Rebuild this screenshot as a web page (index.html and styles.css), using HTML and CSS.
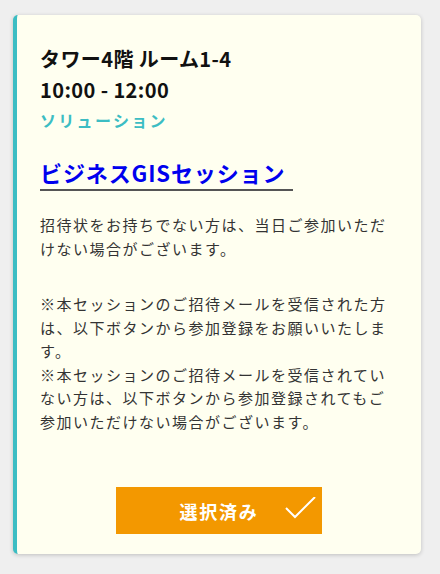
FILE: index.html
```html
<!DOCTYPE html>
<html lang="ja">
<head>
    <meta charset="UTF-8">
    <meta name="viewport" content="width=device-width, initial-scale=1.0">
    <title>ビジネスGISセッション</title>
    <link rel="stylesheet" href="styles.css">
</head>
<body>
    <div class="session-card">
        <div class="session-place">タワー4階 ルーム1-4</div>
        <div class="session-time">10:00 - 12:00</div>
        <div class="session-category">ソリューション</div>

        <h2 class="session-title"><a href="#">ビジネスGISセッション</a></h2>

        <p class="session-desc">招待状をお持ちでない方は、当日ご参加いただけない場合がございます。</p>
        <p class="session-desc session-note">※本セッションのご招待メールを受信された方は、以下ボタンから参加登録をお願いいたします。<br>※本セッションのご招待メールを受信されていない方は、以下ボタンから参加登録されてもご参加いただけない場合がございます。</p>

        <div class="session-action">
            <button class="select-btn" type="button">
                選択済み
                <svg class="check-icon" viewBox="0 0 32 24" width="32" height="24">
                    <polyline points="2,11 11,20 31,0" fill="none" stroke="#fff" stroke-width="2"/>
                </svg>
            </button>
        </div>
    </div>
</body>
</html>
```

FILE: styles.css
```css
:root {
    --fondo: #efefef;
    --tarjeta: #fffff0;
    --turquesa: #3cbdc3;
    --naranja: #f39800;
    --texto: #333333;
}

body {
    margin: 0;
    padding: 15px 19px 20px 13px;
    background-color: var(--fondo);
    font-family: "Noto Sans CJK JP", "Noto Sans", sans-serif;
    color: var(--texto);
}

.session-card {
    background: var(--tarjeta);
    border-left: 4px solid var(--turquesa);
    border-radius: 5px;
    box-shadow: 0 1px 4px rgba(0, 0, 0, 0.2);
    padding: 28px 23px 20px 23px;
}

.session-place,
.session-time {
    font-size: 20px;
    font-weight: bold;
    line-height: 31px;
    letter-spacing: 0.02em;
    color: #111;
}

.session-category {
    margin-top: 2px;
    font-size: 16px;
    font-weight: bold;
    line-height: 26px;
    letter-spacing: 2.3px;
    color: var(--turquesa);
}

.session-title {
    margin: 24px 0 0;
    font-size: 22px;
    line-height: 30px;
    letter-spacing: 0.04em;
}

.session-title a {
    display: inline-block;
    color: #0000ee;
    text-decoration: none;
    border-bottom: 2px solid #555;
    padding-bottom: 2px;
    padding-right: 8px;
}

.session-desc {
    margin: 22px 0 0;
    font-size: 15px;
    line-height: 23.5px;
    letter-spacing: 0.1em;
}

.session-note {
    margin-top: 32px;
}

.session-action {
    display: flex;
    justify-content: center;
    margin-top: 54px;
}

.select-btn {
    position: relative;
    width: 206px;
    height: 47px;
    border: none;
    border-radius: 0;
    background: var(--naranja);
    color: #fff;
    font-family: inherit;
    font-size: 18px;
    font-weight: bold;
    letter-spacing: 0.1em;
}

.check-icon {
    position: absolute;
    right: 6px;
    top: 10px;
}
```
